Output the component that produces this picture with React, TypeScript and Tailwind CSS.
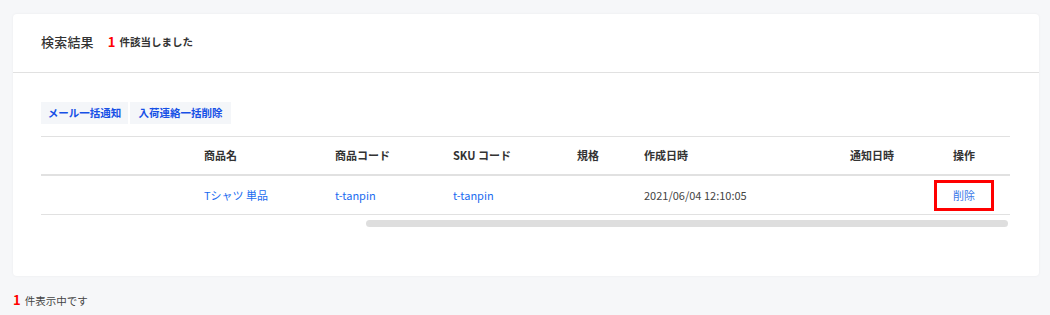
import React from "react";

const font = { fontFamily: '"Noto Sans CJK JP", "Noto Sans", sans-serif' };

export default function App() {
  return (
    <div className="w-[1050px] h-[315px] bg-[#f6f7f9] pt-[14px] px-[13px] overflow-hidden" style={font}>
      <div className="w-[1026px] h-[262px] bg-white rounded-[4px] shadow-[0_0_3px_rgba(0,0,0,0.05)]">
        <div className="h-[59px] border-b border-[#e1e1e1] flex items-center pl-[28px] pb-[2px]">
          <span className="text-[13px] font-medium text-[#333] tracking-[0.2px]">検索結果</span>
          <span className="ml-[14px] text-[13px] font-bold text-[#f00]">1</span>
          <span className="ml-[4px] text-[10.5px] font-bold text-[#333]">件該当しました</span>
        </div>
        <div className="px-[28px] pt-[29px]">
          <div className="flex gap-[2px]">
            <div className="w-[87px] h-[22px] bg-[#f4f6f9] flex items-center justify-center text-[10.5px] font-bold text-[#1650e6]">メール一括通知</div>
            <div className="w-[101px] h-[22px] bg-[#f4f6f9] flex items-center justify-center text-[10.5px] font-bold text-[#1650e6]">入荷連絡一括削除</div>
          </div>
          <div className="mt-[12px] w-[969px] border-t border-[#e1e1e1]">
            <div className="flex h-[39px] items-center border-b-2 border-[#e1e1e1] text-[11px] font-bold text-[#333]">
              <div className="w-[163px]"></div>
              <div className="w-[131px]">商品名</div>
              <div className="w-[118px]">商品コード</div>
              <div className="w-[124px]">SKU コード</div>
              <div className="w-[67px]">規格</div>
              <div className="w-[206px]">作成日時</div>
              <div className="w-[68px]">通知日時</div>
              <div className="w-[92px] text-center">操作</div>
            </div>
            <div className="flex h-[39px] items-center border-b border-[#e1e1e1] text-[11px] text-[#1a6cf0]">
              <div className="w-[163px]"></div>
              <div className="w-[131px]">Tシャツ 単品</div>
              <div className="w-[118px]">t-tanpin</div>
              <div className="w-[124px]">t-tanpin</div>
              <div className="w-[67px]"></div>
              <div className="w-[206px] text-[#444]">2021/06/04 12:10:05</div>
              <div className="w-[68px]"></div>
              <div className="w-[92px] flex justify-center">
                <div className="w-[60px] h-[31px] border-[3px] border-[#f00] flex items-center justify-center text-[#3a78e8]">削除</div>
              </div>
            </div>
          </div>
          <div className="mt-[5px] ml-[325px] w-[642px] h-[7px] rounded-full bg-[#dedede]"></div>
        </div>
      </div>
      <div className="mt-[14px] flex items-baseline">
        <span className="text-[13px] font-bold text-[#f00]">1</span>
        <span className="ml-[4px] text-[10.5px] text-[#444]">件表示中です</span>
      </div>
    </div>
  );
}
